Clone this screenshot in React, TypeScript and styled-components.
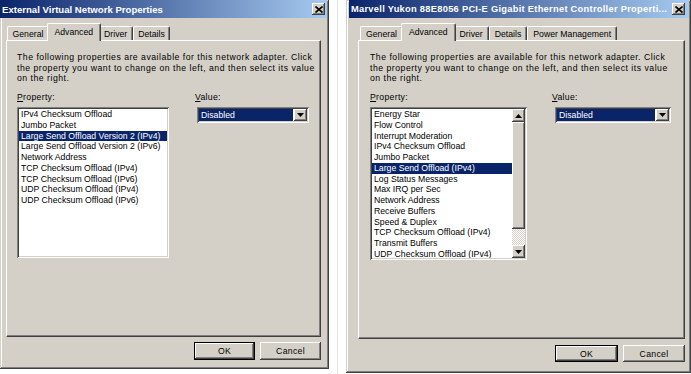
import React from "react";
import styled, { createGlobalStyle, css } from "styled-components";

const GlobalStyle = createGlobalStyle`
  html, body { margin: 0; padding: 0; background: #ffffff; }
  body { font-family: "Liberation Sans", Arial, sans-serif; }
  #root { width: 691px; height: 374px; overflow: hidden; }
`;

const FACE = "#D4D0C8";
const NAVY = "#0A246A";

const raised = css`
  box-shadow: inset -1px -1px #404040, inset 1px 1px #ffffff,
    inset -2px -2px #808080, inset 2px 2px ${FACE};
`;
const sunken = css`
  box-shadow: inset 1px 1px #808080, inset -1px -1px #ffffff,
    inset 2px 2px #404040, inset -2px -2px ${FACE};
`;

const Page = styled.div`
  display: flex;
  align-items: flex-start;
  width: 691px;
  height: 374px;
  background: #ffffff;
`;

const Divider = styled.div`
  width: 1px;
  align-self: stretch;
  background: #e4e4e4;
  margin: 0 8px;
`;

const Dialog = styled.div<{ $w: number; $h: number; $pad: string }>`
  box-sizing: border-box;
  width: ${(p) => p.$w}px;
  height: ${(p) => p.$h}px;
  flex: none;
  background: ${FACE};
  padding: ${(p) => p.$pad};
  display: flex;
  flex-direction: column;
  box-shadow: inset -1px -1px #404040, inset 1px 1px ${FACE},
    inset -2px -2px #808080, inset 2px 2px #ffffff;
`;

const TitleBar = styled.div<{ $padRight: number }>`
  height: 18px;
  flex: none;
  display: flex;
  align-items: center;
  justify-content: space-between;
  gap: 2px;
  padding: 0 ${(p) => p.$padRight}px 0 2px;
  background: linear-gradient(to right, ${NAVY}, #a6caf0);
`;

const TitleText = styled.div<{ $size: number; $spacing?: number }>`
  color: #ffffff;
  font-weight: bold;
  font-size: ${(p) => p.$size}px;
  letter-spacing: ${(p) => p.$spacing ?? 0}px;
  white-space: nowrap;
  overflow: hidden;
`;

const CloseButton = styled.div`
  width: 13px;
  height: 12px;
  flex: none;
  background: ${FACE};
  ${raised};
  display: flex;
  align-items: center;
  justify-content: center;
`;

const Body = styled.div<{ $pad: string }>`
  flex: 1;
  display: flex;
  flex-direction: column;
  padding: ${(p) => p.$pad};
  min-height: 0;
`;

const TabStrip = styled.div<{ $lead: number }>`
  height: 18px;
  flex: none;
  display: flex;
  align-items: flex-end;
  padding-left: ${(p) => p.$lead}px;
  position: relative;
  z-index: 1;
`;

const Tab = styled.div<{ $active?: boolean; $pad: number }>`
  box-sizing: border-box;
  height: ${(p) => (p.$active ? 18 : 14)}px;
  padding: 0 ${(p) => (p.$active ? p.$pad + 2 : p.$pad)}px;
  margin: 0 ${(p) => (p.$active ? -2 : 0)}px
    ${(p) => (p.$active ? -1 : 0)}px;
  display: flex;
  align-items: ${(p) => (p.$active ? "flex-start" : "center")};
  padding-top: ${(p) => (p.$active ? 3 : 0)}px;
  font-size: 8.7px;
  color: #000;
  white-space: nowrap;
  background: ${FACE};
  border-top: 1px solid #ffffff;
  border-left: 1px solid #ffffff;
  border-right: 1px solid #404040;
  border-radius: 2px 2px 0 0;
  box-shadow: inset -1px 0 #808080;
  position: relative;
  z-index: ${(p) => (p.$active ? 2 : 1)};
`;

const Panel = styled.div<{ $pad: string }>`
  flex: 1;
  min-height: 0;
  padding: ${(p) => p.$pad};
  border-top: 1px solid #ffffff;
  border-left: 1px solid #ffffff;
  border-right: 1px solid #404040;
  border-bottom: 1px solid #404040;
  box-shadow: inset -1px -1px #808080;
  display: flex;
  flex-direction: column;
`;

const Description = styled.div`
  font-size: 8.7px;
  line-height: 10.7px;
  letter-spacing: 0.5px;
  color: #000;
  white-space: nowrap;
`;

const Columns = styled.div<{ $gap: number }>`
  display: flex;
  gap: ${(p) => p.$gap}px;
  margin-top: 8px;
`;

const Column = styled.div`
  display: flex;
  flex-direction: column;
`;

const Label = styled.div`
  font-size: 8.7px;
  line-height: 11px;
  letter-spacing: 0.3px;
  color: #000;
  margin-bottom: 4px;
  u { text-decoration: underline; text-underline-offset: 1px; }
`;

const ListBox = styled.div<{ $w: number; $h: number }>`
  box-sizing: border-box;
  width: ${(p) => p.$w}px;
  height: ${(p) => p.$h}px;
  background: #ffffff;
  ${sunken};
  padding: 2px;
  display: flex;
`;

const ListItems = styled.div`
  flex: 1;
  overflow: hidden;
`;

const ListItem = styled.div<{ $selected?: boolean }>`
  height: 10.75px;
  line-height: 10.75px;
  font-size: 8.7px;
  padding-left: 2px;
  white-space: nowrap;
  color: ${(p) => (p.$selected ? "#ffffff" : "#000000")};
  background: ${(p) => (p.$selected ? NAVY : "transparent")};
`;

const ScrollBar = styled.div`
  width: 13px;
  flex: none;
  display: flex;
  flex-direction: column;
  background-color: #ffffff;
  background-image: repeating-conic-gradient(${FACE} 0 25%, #ffffff 0 50%);
  background-size: 2px 2px;
`;

const ScrollButton = styled.div`
  height: 13px;
  flex: none;
  background: ${FACE};
  ${raised};
  display: flex;
  align-items: center;
  justify-content: center;
`;

const ScrollThumb = styled.div<{ $h: number }>`
  height: ${(p) => p.$h}px;
  flex: none;
  background: ${FACE};
  ${raised};
`;

const ScrollTrack = styled.div`
  flex: 1;
`;

const Combo = styled.div<{ $w: number; $offset: number }>`
  box-sizing: border-box;
  width: ${(p) => p.$w}px;
  height: 16px;
  margin-left: ${(p) => p.$offset}px;
  background: #ffffff;
  ${sunken};
  padding: 2px;
  display: flex;
`;

const ComboValue = styled.div`
  flex: 1;
  background: ${NAVY};
  color: #ffffff;
  font-size: 8.7px;
  line-height: 12px;
  padding-left: 2px;
  margin: 0 1px 0 0;
`;

const ComboArrow = styled.div`
  width: 13px;
  flex: none;
  background: ${FACE};
  ${raised};
  display: flex;
  align-items: center;
  justify-content: center;
`;

const ButtonRow = styled.div<{ $mt: number; $mb: number }>`
  display: flex;
  justify-content: flex-end;
  gap: 5px;
  margin: ${(p) => p.$mt}px 0 ${(p) => p.$mb}px 0;
`;

const Button = styled.div<{ $w: number; $h: number; $default?: boolean }>`
  box-sizing: border-box;
  width: ${(p) => p.$w}px;
  height: ${(p) => p.$h}px;
  background: ${FACE};
  font-size: 8.7px;
  letter-spacing: 0.3px;
  color: #000;
  display: flex;
  align-items: center;
  justify-content: center;
  ${(p) =>
    p.$default
      ? css`
          border: 1px solid #000;
          box-shadow: inset -1px -1px #404040, inset 1px 1px #ffffff,
            inset -2px -2px #808080;
        `
      : raised};
`;

const Triangle = ({ up }: { up?: boolean }) => (
  <svg width="7" height="4" viewBox="0 0 7 4">
    <path d={up ? "M3.5 0 L7 4 L0 4 Z" : "M0 0 L7 0 L3.5 4 Z"} fill="#000" />
  </svg>
);

const CloseGlyph = () => (
  <svg width="8" height="7" viewBox="0 0 8 7">
    <path d="M0.5 0.5 L7.5 6.5 M7.5 0.5 L0.5 6.5" stroke="#000" strokeWidth="1.6" />
  </svg>
);

const leftItems = [
  "IPv4 Checksum Offload",
  "Jumbo Packet",
  "Large Send Offload Version 2 (IPv4)",
  "Large Send Offload Version 2 (IPv6)",
  "Network Address",
  "TCP Checksum Offload (IPv4)",
  "TCP Checksum Offload (IPv6)",
  "UDP Checksum Offload (IPv4)",
  "UDP Checksum Offload (IPv6)",
];

const rightItems = [
  "Energy Star",
  "Flow Control",
  "Interrupt Moderation",
  "IPv4 Checksum Offload",
  "Jumbo Packet",
  "Large Send Offload (IPv4)",
  "Log Status Messages",
  "Max IRQ per Sec",
  "Network Address",
  "Receive Buffers",
  "Speed & Duplex",
  "TCP Checksum Offload (IPv4)",
  "Transmit Buffers",
  "UDP Checksum Offload (IPv4)",
];

const DescriptionText = () => (
  <Description>
    The following properties are available for this network adapter. Click
    <br />
    the property you want to change on the left, and then select its value
    <br />
    on the right.
  </Description>
);

const Tabs = ({ labels, pad, lead }: { labels: string[]; pad: number; lead: number }) => (
  <TabStrip $lead={lead}>
    {labels.map((l) => (
      <Tab key={l} $pad={pad} $active={l === "Advanced"}>
        {l}
      </Tab>
    ))}
  </TabStrip>
);

export default function App() {
  return (
    <>
      <GlobalStyle />
      <Page>
        <Dialog $w={329} $h={369} $pad="0 2px 2px 0">
          <TitleBar $padRight={2}>
            <TitleText $size={9.6}>External Virtual Network Properties</TitleText>
            <CloseButton>
              <CloseGlyph />
            </CloseButton>
          </TitleBar>
          <Body $pad="4px 6px 0 6px">
            <Tabs labels={["General", "Advanced", "Driver", "Details"]} pad={4.5} lead={1} />
            <Panel $pad="11px 10px 0 10px">
              <DescriptionText />
              <Columns $gap={26}>
                <Column>
                  <Label>
                    <u>P</u>roperty:
                  </Label>
                  <ListBox $w={152} $h={151}>
                    <ListItems>
                      {leftItems.map((it) => (
                        <ListItem key={it} $selected={it === "Large Send Offload Version 2 (IPv4)"}>
                          {it}
                        </ListItem>
                      ))}
                    </ListItems>
                  </ListBox>
                </Column>
                <Column>
                  <Label>
                    <u>V</u>alue:
                  </Label>
                  <Combo $w={112} $offset={2}>
                    <ComboValue>Disabled</ComboValue>
                    <ComboArrow>
                      <Triangle />
                    </ComboArrow>
                  </Combo>
                </Column>
              </Columns>
            </Panel>
            <ButtonRow $mt={5} $mb={7}>
              <Button $w={61} $h={18} $default>
                OK
              </Button>
              <Button $w={61} $h={18}>
                Cancel
              </Button>
            </ButtonRow>
          </Body>
        </Dialog>
        <Divider />
        <Dialog $w={345} $h={373} $pad="0 2px 2px 3px">
          <TitleBar $padRight={4}>
            <TitleText $size={9.3} $spacing={0.28}>
              Marvell Yukon 88E8056 PCI-E Gigabit Ethernet Controller Properti...
            </TitleText>
            <CloseButton>
              <CloseGlyph />
            </CloseButton>
          </TitleBar>
          <Body $pad="4px 4px 0 9px">
            <Tabs
              labels={["General", "Advanced", "Driver", "Details", "Power Management"]}
              pad={5}
              lead={2}
            />
            <Panel $pad="11px 10px 0 11px">
              <DescriptionText />
              <Columns $gap={25}>
                <Column>
                  <Label>
                    <u>P</u>roperty:
                  </Label>
                  <ListBox $w={157} $h={153}>
                    <ListItems>
                      {rightItems.map((it) => (
                        <ListItem key={it} $selected={it === "Large Send Offload (IPv4)"}>
                          {it}
                        </ListItem>
                      ))}
                    </ListItems>
                    <ScrollBar>
                      <ScrollButton>
                        <Triangle up />
                      </ScrollButton>
                      <ScrollThumb $h={107} />
                      <ScrollTrack />
                      <ScrollButton>
                        <Triangle />
                      </ScrollButton>
                    </ScrollBar>
                  </ListBox>
                </Column>
                <Column>
                  <Label>
                    <u>V</u>alue:
                  </Label>
                  <Combo $w={116} $offset={3}>
                    <ComboValue>Disabled</ComboValue>
                    <ComboArrow>
                      <Triangle />
                    </ComboArrow>
                  </Combo>
                </Column>
              </Columns>
            </Panel>
            <ButtonRow $mt={6} $mb={9}>
              <Button $w={63} $h={17} $default>
                OK
              </Button>
              <Button $w={62} $h={17}>
                Cancel
              </Button>
            </ButtonRow>
          </Body>
        </Dialog>
      </Page>
    </>
  );
}
